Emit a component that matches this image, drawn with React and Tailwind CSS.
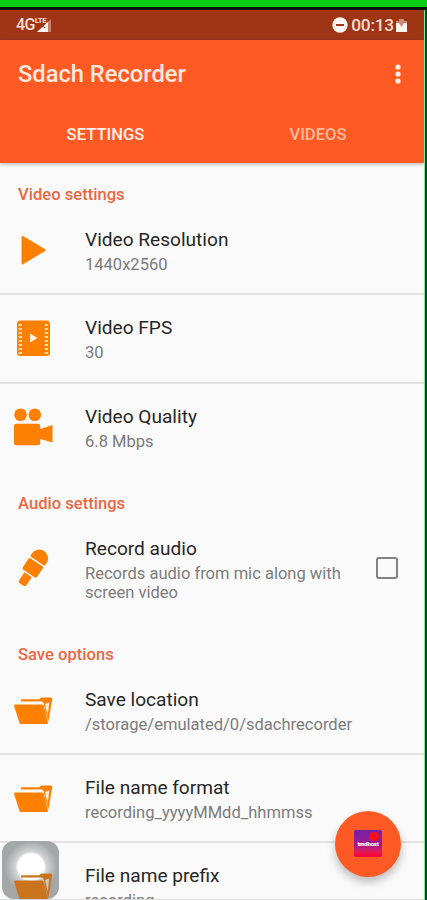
import clsx from 'clsx';

const PlayIcon = () => (
    <svg width="40" height="40" viewBox="0 0 40 40" fill="#ff8000">
        <path d="M8.5 6.2Q8.5 4.2 10.4 5.2L31.8 18Q33.4 19 31.8 20.2L10.4 33Q8.5 34 8.5 32Z" />
    </svg>
);

const FilmIcon = () => (
    <svg width="40" height="40" viewBox="0 0 40 40">
        <rect x="4" y="1.5" width="33" height="35.5" rx="3.5" fill="#ff8000" />
        <path d="M7.4 5V35M33.4 5V35" stroke="#ffdcb5" strokeWidth="3.2" strokeDasharray="2.1 1.9" />
        <path d="M17 14.5L24.5 19L17 23.5Z" fill="#fff3e3" />
    </svg>
);

const CameraIcon = () => (
    <svg width="40" height="40" viewBox="0 0 40 40" fill="#ff8000">
        <circle cx="7.5" cy="6.8" r="6.3" />
        <circle cx="21.8" cy="6.8" r="6.3" />
        <path d="M3 15.7H25Q27.3 15.7 27.3 17.7V21L39.5 17V34.5L27.3 31V35Q27.3 37.3 25 37.3H3Q1 37.3 1 35.3V17.7Q1 15.7 3 15.7Z" />
    </svg>
);

const MicIcon = () => (
    <svg width="40" height="40" viewBox="0 0 40 40" fill="#ff8000">
        <g transform="translate(20 18.5) rotate(34)">
            <path d="M-8.8 -9.2V-11.2A8.8 8.6 0 0 1 8.8 -11.2V-9.2Q8.8 -7.8 7.4 -7.8H-7.4Q-8.8 -7.8 -8.8 -9.2Z" />
            <rect x="-8.6" y="-6.2" width="17.2" height="13.4" rx="1.5" />
            <path d="M-4.4 8.8H4.4V18Q4.4 20.5 1.9 20.5H-1.9Q-4.4 20.5 -4.4 18Z" />
        </g>
    </svg>
);

const FolderIcon = ({ className, color = '#ff8000', slot = '#fff3e3' }) => (
    <svg className={className} width="40" height="40" viewBox="0 0 40 40" fill={color}>
        <path d="M8 10.5V9Q8 8.2 9 8.2H26L28.5 6.5H37.8Q39.6 6.5 39.3 8.3L35.3 31L30.5 12Q30.2 10.5 28.7 10.5Z" />
        <path d="M32 13L36.2 11.5L34.8 24.5Z" fill={slot} />
        <path d="M2.2 13.5H29Q30.5 13.5 30.8 15L35 31.7Q35.2 33 33.9 33H8Q6.7 33 6.4 31.7L1.2 15.2Q.8 13.5 2.2 13.5Z" />
    </svg>
);

const StatusBar = () => (
    <div className="h-[30px] shrink-0 bg-[#a03516] flex items-center justify-between pl-4 pr-[17px] text-[#f8ddd4]">
        <div className="flex items-center">
            <span className="text-[16px] font-medium tracking-[-0.6px]">4G</span>
            <span className="text-[8px] font-bold tracking-[-0.5px] leading-none self-start mt-[4px]">LTE</span>
            <svg className="-ml-[9px]" width="16" height="15" viewBox="0 0 16 15">
                <path d="M0 14L14 1V14Z" fill="#f8ddd4" opacity="0.45" />
                <path d="M0 14L11 4V14Z" fill="#fff5f0" />
                <path d="M3 6L8 10" stroke="#a03516" strokeWidth="1" />
            </svg>
        </div>
        <div className="flex items-center">
            <svg width="16" height="16" viewBox="0 0 16 16">
                <circle cx="8" cy="8" r="7.7" fill="#fff5f0" />
                <path d="M4 8H12" stroke="#a03516" strokeWidth="2" />
            </svg>
            <span className="ml-[3px] text-[17.3px] font-medium leading-none tracking-[-0.2px] mt-[2px]">00:13</span>
            <svg className="ml-[2px] mt-px" width="11" height="13" viewBox="0 0 11 13">
                <path d="M3 0H8V2H11V13H0V2H3Z" fill="#f8ddd4" opacity="0.5" />
                <path d="M0 4H3L5.5 8L8 4H11V13H0Z" fill="#fff5f0" />
            </svg>
        </div>
    </div>
);

const AppBar = () => (
    <header className="h-[123px] shrink-0 bg-[#ff5a24] shadow-[0_1px_4px_rgba(0,0,0,0.3)] relative flex flex-col">
        <div className="h-[67px] shrink-0 flex items-center justify-between pl-[18px] pr-[23px]">
            <h1 className="mt-[2px] text-[23.7px] font-medium text-[#ffe9df]">Sdach Recorder</h1>
            <svg width="6" height="20" viewBox="0 0 6 20" fill="#fff0e8">
                <circle cx="3" cy="3" r="2.6" />
                <circle cx="3" cy="10" r="2.6" />
                <circle cx="3" cy="17" r="2.6" />
            </svg>
        </div>
        <nav className="flex flex-1 text-[16.6px] font-medium leading-[56px] text-center">
            <span className="w-[211px] text-[#fff0e8]">SETTINGS</span>
            <span className="flex-1 pl-px text-[#ffba9f]">VIDEOS</span>
        </nav>
    </header>
);

const SectionTitle = ({ children, className }) => (
    <h2 className={clsx('pl-[18px] text-[16.6px] leading-[20px] font-medium text-[#eb6743]', className)}>{children}</h2>
);

const Row = ({ icon, title, children, className, action, divider }) => (
    <div className={clsx('flex items-center shrink-0', divider && 'border-b-2 border-[#e2e2e2]', className)}>
        <div className="w-[85px] pl-[13px] shrink-0">{icon}</div>
        <div className="flex-1 whitespace-nowrap">
            <div className="text-[19.1px] leading-[24px] text-[#272727]">{title}</div>
            <div className="mt-[3px] text-[16.55px] leading-[19px] text-[#7c7c7c]">{children}</div>
        </div>
        {action}
    </div>
);

const App = () => {
    return (
        <div className="w-[427px] h-[900px] flex flex-col overflow-hidden relative bg-[#fafafa] font-['Roboto',sans-serif]">
            <div className="h-[10px] shrink-0 bg-[#0bce18] border-b-3 border-[#051505]" />
            <div className="flex flex-1 min-h-0">
                <div className="w-[424px] flex flex-col overflow-hidden">
                    <StatusBar />
                    <AppBar />
                    <main className="flex flex-col">
                        <SectionTitle className="mt-[22px]">Video settings</SectionTitle>
                        <Row className="h-[90px] pt-[4px]" divider icon={<PlayIcon />} title="Video Resolution">1440x2560</Row>
                        <Row className="h-[89px] pt-px" divider icon={<FilmIcon />} title="Video FPS">30</Row>
                        <Row className="h-[88px]" icon={<CameraIcon />} title="Video Quality">6.8 Mbps</Row>

                        <SectionTitle className="mt-[22px]">Audio settings</SectionTitle>
                        <Row
                            className="h-[109px] pt-px"
                            icon={<MicIcon />}
                            title="Record audio"
                            action={<div className="w-[22px] h-[22px] mr-[26px] -mt-[2px] rounded-[3px] border-2 border-[#828282]" />}
                        >
                            Records audio from mic along with<br />screen video
                        </Row>

                        <SectionTitle className="mt-[22px]">Save options</SectionTitle>
                        <Row className="h-[90px] pt-[3px]" divider icon={<FolderIcon />} title="Save location">/storage/emulated/0/sdachrecorder</Row>
                        <Row className="h-[88px] pt-[2px]" divider icon={<FolderIcon />} title="File name format">recording_yyyyMMdd_hhmmss</Row>
                        <Row className="h-[88px]" icon={<FolderIcon />} title="File name prefix">recording</Row>
                    </main>
                </div>
                <div className="w-[3px] bg-[#063c5c] border-l border-[#7ee787]" />
            </div>

            {/* floating assistive touch */}
            <div className="absolute left-[2px] top-[841px] w-[57px] h-[58px] rounded-[12px] bg-[#a3a7a8] flex justify-center overflow-hidden">
                <div className="w-[52px] h-[52px] rounded-full bg-[radial-gradient(circle_closest-side,#ffffff_0%,#ffffff_50%,rgba(255,255,255,0.5)_60%,rgba(255,255,255,0)_100%)]" />
                {/* folder showing through the lower half of the button */}
                <FolderIcon className="absolute left-[11px] top-[26px]" color="#c9741c" slot="#c9c5c0" />
            </div>

            {/* record button */}
            <div className="absolute left-[335px] top-[811px] w-[66px] h-[66px] rounded-full bg-[#ff5a24] shadow-[0_5px_9px_rgba(0,0,0,0.25)] flex items-center justify-center">
                <div className="relative w-[28px] h-[27px] -mt-px rounded-[2px] bg-linear-to-b from-[#7a1fa8] from-10% via-[#a3108a] via-55% to-[#f5083c] to-90% flex items-center justify-center">
                    <span className="absolute right-[3px] top-[2px] w-[10px] h-[9px] rounded-full bg-[#fb0d1c]" />
                    <span className="relative text-[6px] leading-none font-black text-white tracking-[-0.2px]">tmdhost</span>
                </div>
            </div>

            <div className="absolute left-0 bottom-0 w-[424px] h-px bg-[#d8d8d8]" />
        </div>
    );
};

export default App;
